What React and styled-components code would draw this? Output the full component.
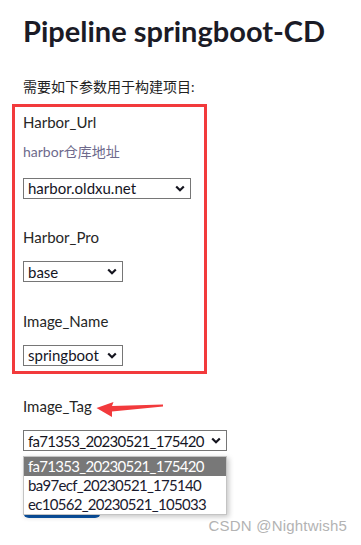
import React from 'react';
import styled, { createGlobalStyle } from 'styled-components';

const GlobalStyle = createGlobalStyle`
  body {
    margin: 0;
    background: #fff;
    font-family: Lato, "Noto Sans CJK SC", sans-serif;
    color: #222;
  }
`;

const params = [
  { name: 'Harbor_Url', hint: 'harbor仓库地址', value: 'harbor.oldxu.net', width: 168 },
  { name: 'Harbor_Pro', value: 'base', width: 100 },
  { name: 'Image_Name', value: 'springboot', width: 100 },
];

const tags = ['fa71353_20230521_175420', 'ba97ecf_20230521_175140', 'ec10562_20230521_105033'];

const Chevron = () => (
  <svg width="10" height="7" viewBox="0 0 10 7">
    <path d="M1.2 1.5 L5 5.2 L8.8 1.5" fill="none" stroke="#15151f" strokeWidth="2.2" />
  </svg>
);

const RedArrow = () => (
  <ArrowMark width="68" height="17" viewBox="0 0 68 17">
    <polygon points="0.5,7 17.5,1 16,5 67,3.6 67,5.4 16,10.5 16,16" fill="#f23a3c" />
  </ArrowMark>
);

const Select = ({ value, width, tight }) => (
  <SelectBox $width={width} $tight={tight}>
    <span>{value}</span>
    <Chevron />
  </SelectBox>
);

const App = () => {
  return (
    <Page>
      <GlobalStyle />
      <Title>Pipeline springboot-CD</Title>
      <Intro>需要如下参数用于构建项目:</Intro>
      <Highlight>
        {params.map((p) => (
          <Field key={p.name}>
            <Label $hasHint={!!p.hint}>{p.name}</Label>
            {p.hint && <Hint>{p.hint}</Hint>}
            <Select value={p.value} width={p.width} />
          </Field>
        ))}
      </Highlight>
      <TagField>
        <Label>
          Image_Tag
          <RedArrow />
        </Label>
        <SelectWrap>
          <Select value={tags[0]} width={204} tight />
          <Dropdown>
            {tags.map((t, i) => (
              <Option key={t} $active={i === 0}>{t}</Option>
            ))}
          </Dropdown>
        </SelectWrap>
        <BuildButton />
      </TagField>
      <Watermark>CSDN @Nightwish5</Watermark>
    </Page>
  );
};

const Page = styled('div')`
  position: relative;
  box-sizing: border-box;
  height: 545px;
  overflow: hidden;
  padding: 12.5px 23px 0;
`;

const Title = styled('h1')`
  margin: 0;
  font-size: 29px;
  line-height: 36px;
  font-weight: 700;
  color: #1b1b26;
`;

const Intro = styled('p')`
  margin: 28.5px 0 7px;
  font-size: 14px;
  line-height: 20px;
  color: #222;
`;

const Highlight = styled('div')`
  box-sizing: border-box;
  width: 195px;
  margin-left: -11px;
  padding: 5px 8px;
  border: 3px solid #f23a3c;
`;

const Field = styled('div')`
  & + & {
    margin-top: 28.5px;
  }
`;

const Label = styled('div')`
  position: relative;
  font-size: 15px;
  line-height: 20px;
  color: #262626;
  margin-bottom: ${(p) => (p.$hasHint ? 10 : 14)}px;
`;

const ArrowMark = styled('svg')`
  position: absolute;
  left: 73px;
  top: 4.5px;
`;

const Hint = styled('div')`
  font-size: 14px;
  line-height: 20px;
  color: #6e6a8c;
  margin-bottom: 15.5px;
`;

const SelectBox = styled('div')`
  display: flex;
  align-items: center;
  justify-content: space-between;
  box-sizing: border-box;
  width: ${(p) => p.$width}px;
  height: 21px;
  padding: 0 5px 0 4px;
  border: 1px solid #767676;
  font-size: 15px;
  letter-spacing: ${(p) => (p.$tight ? '-0.7px' : 'normal')};
  color: #15151f;
  background: #fff;
`;

const TagField = styled('div')`
  margin-top: 22.5px;
`;

const SelectWrap = styled('div')`
  position: relative;
  z-index: 1;
`;

const Dropdown = styled('div')`
  position: absolute;
  top: 26px;
  left: 0;
  box-sizing: border-box;
  width: 204px;
  background: #fff;
  border: 1px solid #c4c4c4;
  box-shadow: 2px 2px 5px rgba(0, 0, 0, 0.22);
`;

const Option = styled('div')`
  height: 19px;
  line-height: 19px;
  padding: 0 4px;
  font-size: 15px;
  letter-spacing: -0.7px;
  color: ${(p) => (p.$active ? '#fff' : '#1a1a2e')};
  background: ${(p) => (p.$active ? '#787878' : 'transparent')};
`;

const BuildButton = styled('div')`
  width: 78px;
  height: 30px;
  margin-top: 37px;
  border-radius: 6px;
  background: #0b55a8;
`;

const Watermark = styled('div')`
  position: absolute;
  right: 14px;
  bottom: 11.5px;
  font-family: "Liberation Sans", Arial, sans-serif;
  font-size: 15px;
  letter-spacing: 0.2px;
  line-height: 17px;
  color: #b3b3b3;
`;

export default App;
